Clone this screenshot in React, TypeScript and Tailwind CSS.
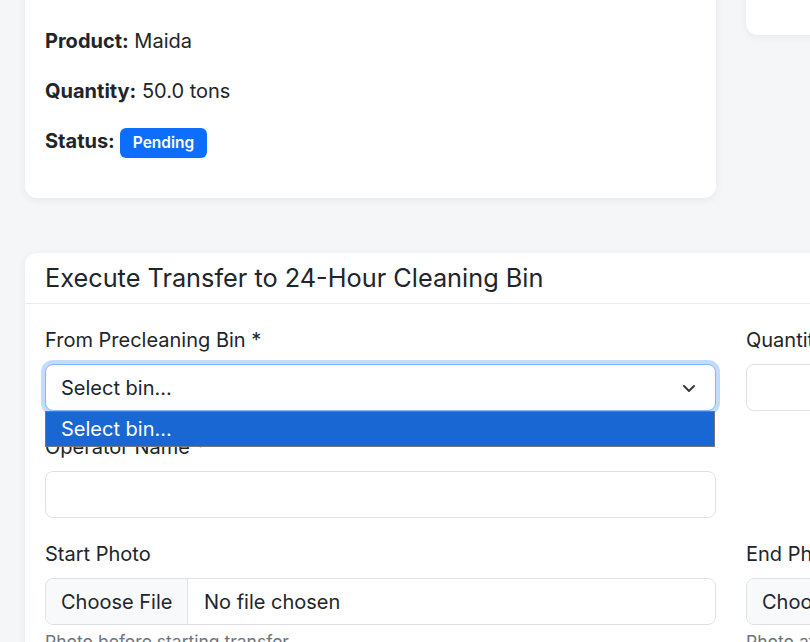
import React from "react";

const font = { fontFamily: "Inter, 'Noto Sans', 'Liberation Sans', sans-serif" };

function Label({ children }: { children: React.ReactNode }) {
  return <div className="mb-[9px] text-[20px] leading-[30px] text-[#212529]">{children}</div>;
}

function FileInput() {
  return (
    <div className="flex h-[47px] items-stretch overflow-hidden rounded-[8px] border border-[#dee2e6] bg-white text-[20px] text-[#212529]">
      <div className="flex w-[142px] shrink-0 items-center border-r border-[#dee2e6] bg-[#f8f9fa] pl-[15px]">
        Choose File
      </div>
      <div className="flex items-center pl-[16px] whitespace-nowrap">No file chosen</div>
    </div>
  );
}

export default function App() {
  return (
    <div className="h-[642px] w-[810px] overflow-hidden bg-[#f5f6f8]" style={font}>
      <div className="w-[1462px] px-[25px]">
        <div className="grid grid-cols-[691px_691px] gap-x-[30px]">
          <div className="-mt-[20px] rounded-[12px] bg-white px-[20px] pb-[22px] pt-[46px] shadow-[0_2px_8px_rgba(0,0,0,0.06)]">
            <p className="mb-[20px] text-[20px] leading-[30px] text-[#212529]">
              <span className="font-bold">Product:</span> Maida
            </p>
            <p className="mb-[20px] text-[20px] leading-[30px] text-[#212529]">
              <span className="font-bold">Quantity:</span> 50.0 tons
            </p>
            <p className="mb-[20px] flex h-[30px] items-center text-[20px] text-[#212529]">
              <span className="font-bold">Status:</span>
              <span className="ml-[5px] mt-[3px] inline-flex h-[30px] items-center rounded-[6px] bg-[#0d6efd] px-[13px] text-[15.5px] font-semibold text-white">
                Pending
              </span>
            </p>
          </div>
          <div className="-mt-[20px] h-[55px] self-start rounded-[12px] bg-white shadow-[0_2px_8px_rgba(0,0,0,0.06)]" />
        </div>

        <div className="mt-[55px] w-[1412px] rounded-[12px] bg-white shadow-[0_2px_8px_rgba(0,0,0,0.06)]">
          <div className="flex h-[51px] items-center border-b border-[#e9ecef] px-[20px]">
            <h2 className="text-[25.3px] font-normal leading-[30px] text-[#212529]">
              Execute Transfer to 24-Hour Cleaning Bin
            </h2>
          </div>
          <div className="grid grid-cols-[671px_671px] gap-x-[30px] px-[20px] pt-[21px]">
            <div>
              <div className="relative mb-[21px]">
                <Label>From Precleaning Bin *</Label>
                <div className="relative flex h-[47px] items-center rounded-[8px] border border-[#86b7fe] bg-white pl-[15px] text-[20px] text-[#212529] shadow-[0_0_0_4px_rgba(13,110,253,0.25)]">
                  Select bin...
                  <svg
                    className="absolute right-[18px] top-1/2 -translate-y-1/2"
                    width="16"
                    height="16"
                    viewBox="0 0 16 16"
                    fill="none"
                    stroke="#343a40"
                    strokeWidth="2"
                    strokeLinecap="round"
                    strokeLinejoin="round"
                  >
                    <path d="m3 6 5 5 5-5" />
                  </svg>
                </div>
                <div className="absolute left-0 top-[86px] z-10 flex h-[36px] w-[670px] items-center border border-[#767676] bg-[#1967d2] pl-[15px] text-[20px] text-white">
                  Select bin...
                </div>
              </div>
              <div className="mb-[21px]">
                <Label>Operator Name *</Label>
                <div className="h-[47px] rounded-[8px] border border-[#dee2e6] bg-white" />
              </div>
              <div>
                <Label>Start Photo</Label>
                <FileInput />
                <div className="mt-[4px] text-[17.5px] leading-[26px] text-[#6c757d]">
                  Photo before starting transfer
                </div>
              </div>
            </div>
            <div>
              <div className="mb-[21px]">
                <Label>Quantity Transferred (tons) *</Label>
                <div className="h-[47px] rounded-[8px] border border-[#dee2e6] bg-white" />
              </div>
              <div className="mb-[21px] h-[86px]" />
              <div>
                <Label>End Photo</Label>
                <FileInput />
                <div className="mt-[4px] text-[17.5px] leading-[26px] text-[#6c757d]">
                  Photo after completing transfer
                </div>
              </div>
            </div>
          </div>
        </div>
      </div>
    </div>
  );
}
